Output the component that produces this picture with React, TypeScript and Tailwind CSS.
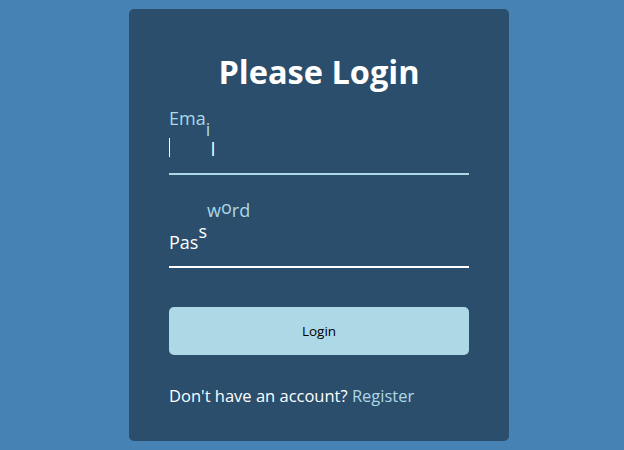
const font = { fontFamily: '"Open Sans", "Noto Sans", sans-serif' };

type Letter = { ch: string; y: number; up: boolean };

const emailLetters: Letter[] = [
  { ch: 'E', y: -31, up: true },
  { ch: 'm', y: -31, up: true },
  { ch: 'a', y: -31, up: true },
  { ch: 'i', y: -20, up: true },
  { ch: 'l', y: 0, up: false },
];

const passwordLetters: Letter[] = [
  { ch: 'P', y: 0, up: false },
  { ch: 'a', y: 0, up: false },
  { ch: 's', y: 0, up: false },
  { ch: 's', y: -11, up: false },
  { ch: 'w', y: -32, up: true },
  { ch: 'o', y: -35, up: true },
  { ch: 'r', y: -32, up: true },
  { ch: 'd', y: -32, up: true },
];

function WaveLabel({ letters }: { letters: Letter[] }) {
  return (
    <label className="pointer-events-none absolute left-0 top-[13px] leading-[24px]">
      {letters.map((l, i) => (
        <span
          key={i}
          className={`inline-block min-w-[5px] text-[18px] ${l.up ? 'text-[#add8e6]' : 'text-white'}`}
          style={{ transform: `translateY(${l.y}px)` }}
        >
          {l.ch}
        </span>
      ))}
    </label>
  );
}

export default function App() {
  return (
    <div className="flex min-h-screen items-center justify-center bg-[#4682b4] pl-[14px]" style={font}>
      <div className="w-[380px] rounded-[5px] bg-[#2a4e6c] px-[40px] py-[20px]">
        <h1 className="mt-[21px] h-[43px] text-center text-[32.5px] font-bold leading-[43px] text-white">Please Login</h1>

        <form onSubmit={(e) => e.preventDefault()}>
          {/* email, focused */}
          <div className="relative mt-[31px]">
            <input
              type="text"
              className="block h-[51px] w-full border-0 border-b-2 border-[#add8e6] bg-transparent text-[18px] text-white outline-none"
            />
            <WaveLabel letters={emailLetters} />
            <span className="absolute left-0 top-[14px] h-[19px] w-px bg-white" />
          </div>

          {/* password */}
          <div className="relative mt-[42px]">
            <input
              type="password"
              className="block h-[51px] w-full border-0 border-b-2 border-white bg-transparent text-[18px] text-white outline-none"
            />
            <WaveLabel letters={passwordLetters} />
          </div>

          <button className="mt-[39px] block h-[48px] w-full rounded-[5px] bg-[#add8e6] pt-px text-[13.5px] text-black">
            Login
          </button>

          <p className="mt-[30px] mb-[14px] text-[16.5px] leading-[22px] text-white">
            Don't have an account? <a href="#" className="text-[#add8e6]">Register</a>
          </p>
        </form>
      </div>
    </div>
  );
}
